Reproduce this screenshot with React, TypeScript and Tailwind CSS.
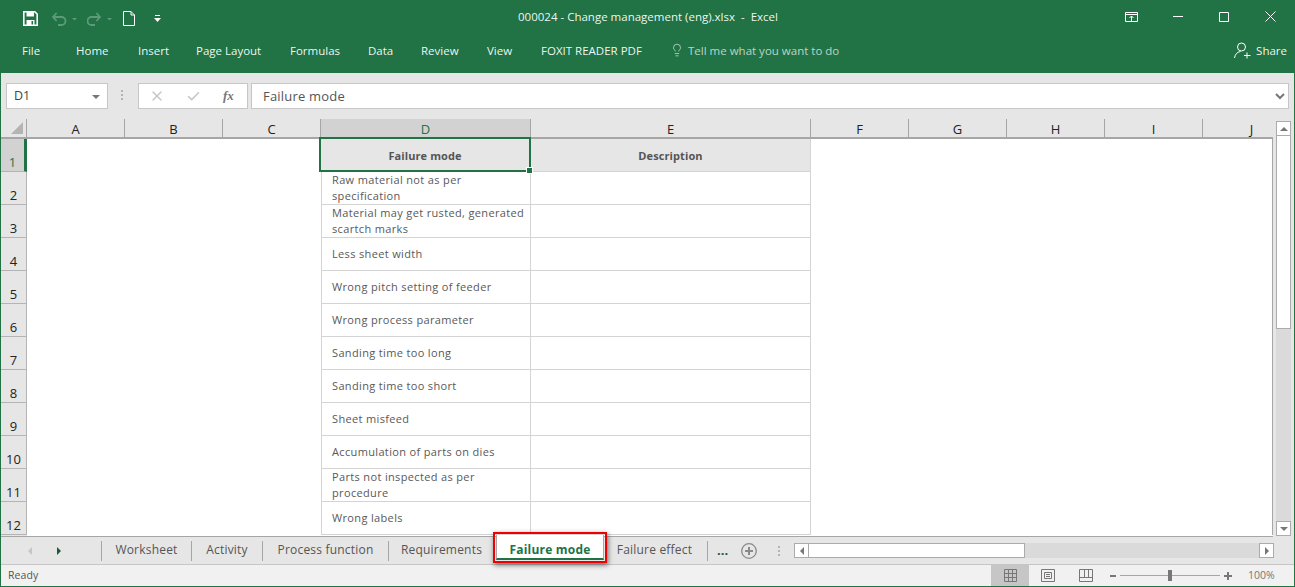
import { Lightbulb, Check, X } from "lucide-react"

const ui = "font-['Open_Sans','Liberation_Sans',sans-serif]"

const columns = ["A", "B", "C", "D", "E", "F", "G", "H", "I", "J"]

const ribbonTabs = [
  { label: "File", w: "w-[54px]" },
  { label: "Home", w: "w-[62px]" },
  { label: "Insert", w: "w-[58px]" },
  { label: "Page Layout", w: "w-[94px]" },
  { label: "Formulas", w: "w-[78px]" },
  { label: "Data", w: "w-[53px]" },
  { label: "Review", w: "w-[66px]" },
  { label: "View", w: "w-[54px]" },
  { label: "FOXIT READER PDF", w: "w-[129px]" },
]

const rows: { n: number; text: string[] }[] = [
  { n: 2, text: ["Raw material not as per", "specification"] },
  { n: 3, text: ["Material may get rusted, generated", "scartch marks"] },
  { n: 4, text: ["Less sheet width"] },
  { n: 5, text: ["Wrong pitch setting of feeder"] },
  { n: 6, text: ["Wrong process parameter"] },
  { n: 7, text: ["Sanding time too long"] },
  { n: 8, text: ["Sanding time too short"] },
  { n: 9, text: ["Sheet misfeed"] },
  { n: 10, text: ["Accumulation of parts on dies"] },
  { n: 11, text: ["Parts not inspected as per", "procedure"] },
  { n: 12, text: ["Wrong labels"] },
]

const sheetCols = "grid grid-cols-[26px_98px_98px_98px_210px_280px_98px_98px_98px_98px_98px]"

function TitleBar() {
  return (
    <div className="flex h-[37px] items-center">
      <div className="flex w-[430px] items-center pl-[23px]">
        <svg width="15" height="15" viewBox="0 0 15 15" fill="none">
          <path d="M.8.8h11l2.400 2.400v11H.8z" stroke="#fff" strokeWidth="1.600" />
          <path d="M3.500 1h7.500v4.500H3.500z" fill="#fff" />
          <path d="M3.500 9h8v5.500h-8z" fill="#fff" />
          <path d="M8.500 10h1.600v3.500H8.500z" fill="#217346" />
        </svg>
        <svg className="ml-[14px]" width="28" height="14" viewBox="0 0 28 14" fill="none" stroke="#5c9a7a" strokeWidth="1.800">
          <path d="M1 5h8.500a3.600 3.600 0 0 1 0 8H6" />
          <path d="M4.600 1 1 5l3.600 4" />
          <path d="M20 6h5l-2.500 2.500z" fill="#5c9a7a" stroke="none" />
        </svg>
        <svg className="ml-[7px]" width="27" height="14" viewBox="0 0 27 14" fill="none" stroke="#5c9a7a" strokeWidth="1.800">
          <path d="M13 5H4.500a3.600 3.600 0 0 0 0 8H8" />
          <path d="M9.400 1 13 5 9.400 9" />
          <path d="M20 6h5l-2.500 2.500z" fill="#5c9a7a" stroke="none" />
        </svg>
        <svg className="ml-[9px]" width="12" height="15" viewBox="0 0 12 15" fill="none" stroke="#fff" strokeWidth="1">
          <path d="M.5.5h7.500l3.500 3.500v10.500H.5z" />
          <path d="M8 .5V4h3.500" />
        </svg>
        <svg className="ml-[19px]" width="7" height="7" viewBox="0 0 7 7" fill="#fff">
          <path d="M1 0h5v1H1zM0 3h7L3.500 7z" />
        </svg>
      </div>
      <div className="-mt-[3px] ml-[2px] w-[432px] text-center text-[11.500px] leading-[16px] text-white/95">
        000024 - Change management (eng).xlsx&nbsp; -&nbsp; Excel
      </div>
      <div className="-mt-[4px] ml-auto flex items-center pr-[19px]">
        <svg width="13" height="10" viewBox="0 0 13 10" fill="none" stroke="#fff">
          <path d="M.5.5h12v9H.5zM.5 2.500h12M6.500 9V4M4.500 6l2-2 2 2" />
        </svg>
        <svg className="ml-[35px]" width="10" height="2" viewBox="0 0 10 2" fill="#fff">
          <path d="M0 0h10v1H0z" />
        </svg>
        <svg className="ml-[36px]" width="10" height="10" viewBox="0 0 10 10" fill="none" stroke="#fff">
          <path d="M.5.5h9v9h-9z" />
        </svg>
        <svg className="ml-[36px]" width="11" height="11" viewBox="0 0 11 11" fill="none" stroke="#fff">
          <path d="M.5.500l10 10M10.500.500l-10 10" />
        </svg>
      </div>
    </div>
  )
}

function RibbonTabs() {
  return (
    <div className="flex h-[36px] items-start pl-[22px] pt-[6px] text-[11.500px] leading-[16px] text-white/95">
      {ribbonTabs.map((t) => (
        <span key={t.label} className={t.w}>{t.label}</span>
      ))}
      <Lightbulb className="text-white/90" size={14} strokeWidth={1.100} />
      <span className="ml-[4px] text-white/70">Tell me what you want to do</span>
      <div className="ml-auto flex items-start pr-[8px]">
        <svg className="-mt-[1px]" width="17" height="17" viewBox="0 0 17 17" fill="none" stroke="#fff" strokeWidth="1">
          <circle cx="7.500" cy="5" r="4" />
          <path d="M.5 16c.5-3.500 2.500-6 6-6.500M10 13.500h6.500M13 10.500v6" />
        </svg>
        <span className="ml-[5px]">Share</span>
      </div>
    </div>
  )
}

function FormulaBar() {
  return (
    <div className="flex h-[46px] items-start bg-[#e6e6e6] pl-[5px] pr-[5px] pt-[10px]">
      <div className="flex h-[26px] w-[102px] items-center justify-between border border-[#c6c6c6] bg-white pl-[7px] pr-[7px] pt-[1px] text-[12.500px] text-[#444]">
        D1
        <span className="h-0 w-0 border-x-[4px] border-t-[4px] border-x-transparent border-t-[#777]" />
      </div>
      <div className="ml-[13px] mt-[7px] flex w-[2px] flex-col gap-[2px]">
        <span className="h-[2px] bg-[#b4b4b4]" />
        <span className="h-[2px] bg-[#b4b4b4]" />
        <span className="h-[2px] bg-[#b4b4b4]" />
      </div>
      <div className="ml-[15px] flex h-[26px] w-[110px] items-center border border-[#c6c6c6] bg-white pl-[10px]">
        <X className="text-[#c6c6c6]" size={16} strokeWidth={2} />
        <Check className="ml-[21px] text-[#c6c6c6]" size={15} strokeWidth={2.400} />
        <span className="ml-[22px] font-['Liberation_Serif',serif] text-[13px] font-bold italic text-[#777]">fx</span>
      </div>
      <div className="ml-[3px] flex h-[26px] flex-1 items-center justify-between border border-[#c6c6c6] bg-white pl-[11px] pr-[3px] pt-[1px] text-[13px] tracking-[0.2px] text-[#555]">
        Failure mode
        <svg width="10" height="7" viewBox="0 0 10 7" fill="none" stroke="#777" strokeWidth="2">
          <path d="M1 1l4 4 4-4" />
        </svg>
      </div>
    </div>
  )
}

function RowHeader({ n, active }: { n: number; active?: boolean }) {
  return (
    <div
      className={`flex h-[33px] items-end justify-center border-b border-[#b4b4b4] pb-[1px] text-[13px] leading-[16px] ${
        active ? "border-r-[3px] border-r-[#217346] bg-[#d2d2d2] text-[#217346]" : "border-r border-r-[#b4b4b4] bg-[#e6e6e6] text-[#222]"
      }`}
    >
      {n}
    </div>
  )
}

function Sheet() {
  return (
    <div className="flex h-[418px] overflow-hidden bg-[#e6e6e6]">
      <div className="h-full w-[1272px] overflow-hidden border-b border-[#a6a6a6]">
        {/* column letters */}
        <div className={`${sheetCols} h-[20px] grid-rows-[20px]`}>
          <div className="flex items-end justify-end border-b-2 border-r border-[#a6a6a6] pb-[3px] pr-[3px]">
            <svg width="12" height="12" viewBox="0 0 12 12" fill="#b4b4b4">
              <path d="M12 0v12H0z" />
            </svg>
          </div>
          {columns.map((c) => (
            <div
              key={c}
              className={`flex items-center justify-center border-b-2 border-r border-[#a6a6a6] pt-[1px] text-[13px] leading-[16px] ${
                c === "D" ? "bg-[#d2d2d2] text-[#217346]" : "text-[#222]"
              }`}
            >
              {c}
            </div>
          ))}
        </div>

        {/* header row */}
        <div className={`${sheetCols} h-[33px] border-r border-[#a6a6a6] bg-white`}>
          <RowHeader n={1} active />
          <div className="col-span-3" />
          <div className="relative -ml-[2px] -mt-[2px] flex h-[35px] w-[212px] items-center justify-center border-[2px] border-[#217346] bg-[#e7e6e6] pt-[4px] text-[11px] font-bold tracking-[0.1px] text-[#555]">
            Failure mode
            <span className="absolute -bottom-[4px] -right-[4px] h-[7px] w-[7px] border border-white bg-[#217346]" />
          </div>
          <div className="flex items-center justify-center border-b border-r border-[#d4d4d4] bg-[#e7e6e6] pt-[2px] text-[11px] font-bold tracking-[0.1px] text-[#555]">
            Description
          </div>
        </div>

        {rows.map((r) => (
          <div key={r.n} className={`${sheetCols} h-[33px] border-r border-[#a6a6a6] bg-white`}>
            <RowHeader n={r.n} />
            <div className="col-span-3" />
            <div className="flex flex-col justify-center border-b border-l border-r border-[#d4d4d4] pl-[10px] text-[11px] leading-[16px] tracking-[0.35px] text-[#595959]">
              {r.text.map((t) => (
                <span key={t} className="whitespace-nowrap">{t}</span>
              ))}
            </div>
            <div className="border-b border-r border-[#d4d4d4]" />
          </div>
        ))}
        <div className="ml-[26px] h-[1px] bg-white" />
      </div>

      {/* vertical scrollbar */}
      <div className="ml-[3px] mt-[2px] flex h-[415px] w-[15px] flex-col bg-[#dadada]">
        <div className="flex h-[15px] items-center justify-center border border-[#ababab] bg-white">
          <span className="h-0 w-0 border-x-[4px] border-b-[4px] border-x-transparent border-b-[#777]" />
        </div>
        <div className="h-[193px] border-x border-b border-[#ababab] bg-white" />
        <div className="mt-auto flex h-[15px] items-center justify-center border border-[#ababab] bg-white">
          <span className="h-0 w-0 border-x-[4px] border-t-[4px] border-x-transparent border-t-[#777]" />
        </div>
      </div>
    </div>
  )
}

function SheetTab({ label, className }: { label: string; className: string }) {
  return (
    <div className={`flex h-[20px] items-center justify-center border-r border-[#a6a6a6] pb-[2px] text-[12px] tracking-[0.2px] text-[#555] ${className}`}>
      {label}
    </div>
  )
}

function TabBar() {
  return (
    <div className="flex h-[28px] items-center border-b border-[#c6c6c6] bg-[#e6e6e6]">
      <div className="flex h-[20px] w-[101px] items-center border-r border-[#a6a6a6] pl-[27px]">
        <span className="h-0 w-0 border-y-[4px] border-r-[4px] border-y-transparent border-r-[#c6c6c6]" />
        <span className="ml-[25px] h-0 w-0 border-y-[4px] border-l-[4px] border-y-transparent border-l-[#185c37]" />
      </div>
      <SheetTab label="Worksheet" className="w-[90px]" />
      <SheetTab label="Activity" className="w-[71px]" />
      <SheetTab label="Process function" className="w-[126px]" />
      <div className="flex h-[20px] w-[104px] items-center justify-center pb-[2px] pl-[1px] text-[12px] tracking-[0.2px] text-[#555]">Requirements</div>
      <div className="relative z-10 -mt-[6px] h-[31px] w-[114px] border-[2px] border-[#e00] p-[1px] shadow-[1px_2px_5px_rgba(0,0,0,0.55)]">
        <div className="flex h-full items-center justify-center border-x border-b-2 border-x-[#a6a6a6] border-b-[#217346] bg-white pt-[7px] text-[12px] font-bold tracking-[0.2px] text-[#217346]">
          Failure mode
        </div>
      </div>
      <SheetTab label="Failure effect" className="w-[101px] pr-[5px] tracking-[0.1px]" />
      <span className="ml-[9px] mt-[1px] text-[13px] font-bold text-[#185c37]">...</span>
      <svg className="ml-[13px]" width="16" height="16" viewBox="0 0 16 16" fill="none" stroke="#8a8a8a">
        <circle cx="8" cy="8" r="7.300" strokeWidth="1.300" />
        <path d="M8 4v8M4 8h8" strokeWidth="2" />
      </svg>
      <div className="ml-[21px] flex w-[2px] flex-col gap-[2px]">
        <span className="h-[2px] bg-[#b4b4b4]" />
        <span className="h-[2px] bg-[#b4b4b4]" />
        <span className="h-[2px] bg-[#b4b4b4]" />
      </div>
      <div className="ml-[14px] flex h-[15px] w-[480px] bg-[#dadada]">
        <div className="flex w-[15px] items-center justify-center border border-[#ababab] bg-white">
          <span className="h-0 w-0 border-y-[4px] border-r-[4px] border-y-transparent border-r-[#777]" />
        </div>
        <div className="w-[216px] border-y border-r border-[#ababab] bg-white" />
        <div className="ml-auto flex w-[15px] items-center justify-center border border-[#ababab] bg-white">
          <span className="h-0 w-0 border-y-[4px] border-l-[4px] border-y-transparent border-l-[#777]" />
        </div>
      </div>
    </div>
  )
}

function StatusBar() {
  return (
    <div className="flex h-[21px] items-center bg-[#f1f1f1] text-[10.500px] text-[#555]">
      <span className="pl-[7px] tracking-[0.1px]">Ready</span>
      <div className="ml-auto flex h-full items-center">
        <div className="flex h-full w-[38px] items-center justify-center bg-[#c6c6c6]">
          <svg width="13" height="13" viewBox="0 0 13 13" fill="none" stroke="#777">
            <path d="M.5.5h12v12H.5zM.5 4.500h12M.5 8.500h12M4.500.5v12M8.500.5v12" />
          </svg>
        </div>
        <svg className="ml-[12px]" width="14" height="13" viewBox="0 0 14 13" fill="none" stroke="#777">
          <path d="M.5.5h13v12H.5zM3.500 3.500h7v6h-7zM5 5.500h4M5 7.500h4" />
        </svg>
        <svg className="ml-[24px]" width="14" height="13" viewBox="0 0 14 13" fill="none" stroke="#777">
          <path d="M.5.5h13v12H.5zM.5 8.500h13M5.500.5v8M9.500.5v8" />
        </svg>
        <span className="ml-[17px] h-[2px] w-[6px] bg-[#777]" />
        <div className="relative ml-[4px] h-[1px] w-[100px] bg-[#a6a6a6]">
          <span className="absolute left-[48px] -top-[5px] h-[11px] w-[4px] bg-[#777]" />
        </div>
        <svg className="ml-[4px]" width="8" height="8" viewBox="0 0 8 8" fill="#777">
          <path d="M3 0h2v3h3v2H5v3H3V5H0V3h3z" />
        </svg>
        <span className="ml-[16px] mr-[19px] w-[27px] whitespace-nowrap text-[#777]">100%</span>
      </div>
    </div>
  )
}

export default function App() {
  return (
    <div className={`flex h-[587px] w-[1295px] flex-col overflow-hidden border-x border-b border-[#217346] bg-[#e6e6e6] ${ui}`}>
      <div className="-mx-[1px] bg-[#217346]">
        <TitleBar />
        <RibbonTabs />
      </div>
      <FormulaBar />
      <Sheet />
      <TabBar />
      <StatusBar />
    </div>
  )
}
